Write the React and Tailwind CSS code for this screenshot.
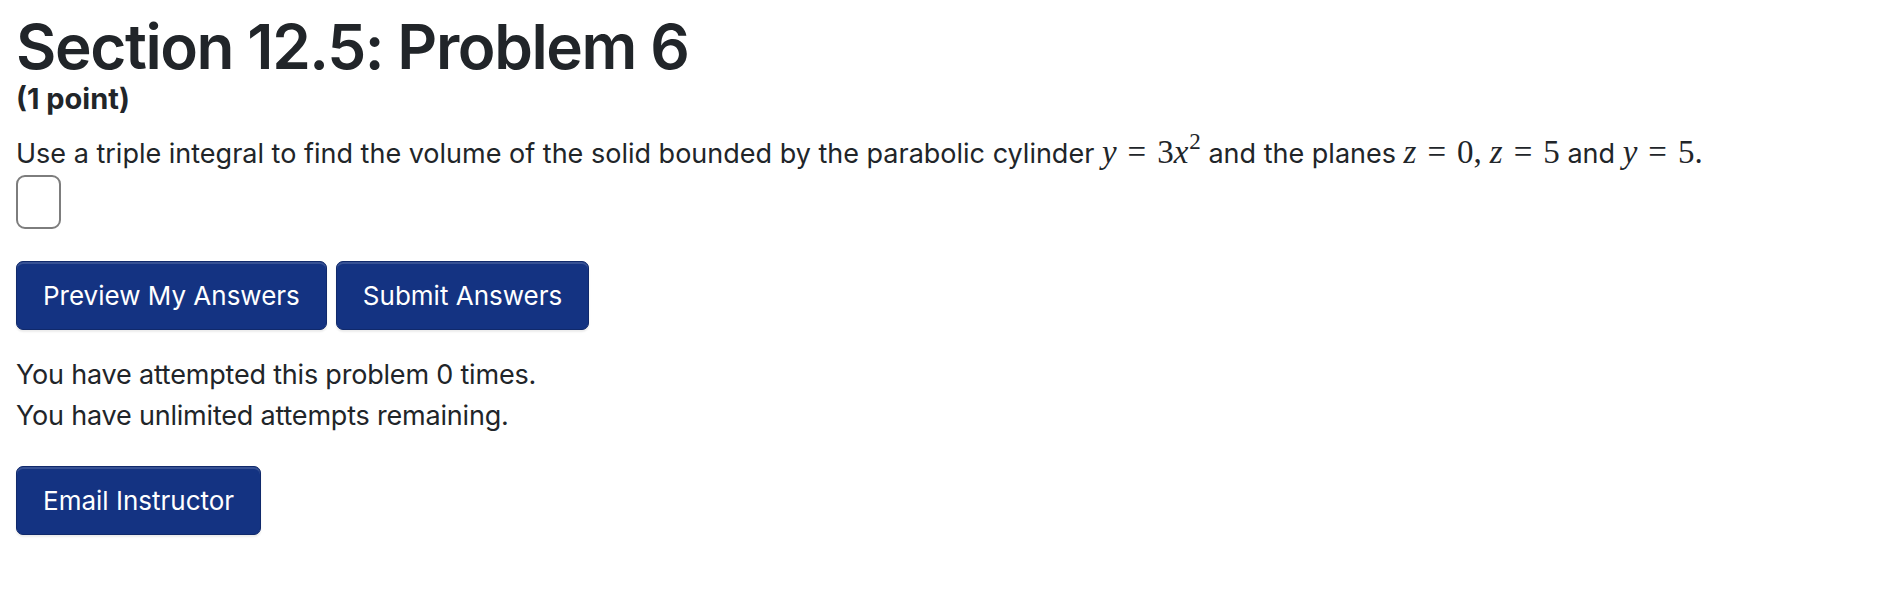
import React from 'react';

const serif = { fontFamily: '"Liberation Serif", serif' };

const MathVar = ({ children }) => (
    <span className="italic" style={serif}>{children}</span>
);

const MathNum = ({ children }) => (
    <span style={serif}>{children}</span>
);

const Eq = () => (
    <span className="mx-[11px]" style={serif}>=</span>
);

const Btn = ({ children }) => (
    <button className="h-[69px] px-[26px] rounded-[7px] bg-[#143382] border border-[#10296b] text-white text-[26px] leading-none shadow-[inset_0_2px_0_rgba(255,255,255,0.15),0_2px_2px_rgba(0,0,0,0.08)]">
        {children}
    </button>
);

const App = () => {
    return (
        <div className="w-[1888px] h-[606px] bg-white text-[#212529] px-4 font-['Inter',sans-serif]">
            <h2 className="pt-[15px] text-[62px] leading-[64px] font-semibold tracking-[-1.4px]">Section 12.5: Problem 6</h2>
            <div className="text-[29px] leading-[40px] font-bold">(1 point)</div>

            <p className="mt-[14px] text-[27px] leading-[42px]">
                Use a triple integral to find the volume of the solid bounded by the parabolic cylinder{' '}
                <span className="text-[33px] leading-none">
                    <MathVar>y</MathVar><Eq /><MathNum>3</MathNum><MathVar>x</MathVar>
                    <span className="text-[23px] relative -top-[14px] ml-[1px]" style={serif}>2</span>
                </span>{' '}
                and the planes{' '}
                <span className="text-[33px] leading-none">
                    <MathVar>z</MathVar><Eq /><MathNum>0,</MathNum><span className="ml-[8px]"><MathVar>z</MathVar></span><Eq /><MathNum>5</MathNum>
                </span>{' '}
                and{' '}
                <span className="text-[33px] leading-none">
                    <MathVar>y</MathVar><Eq /><MathNum>5.</MathNum>
                </span>
            </p>

            <div className="w-[45px] h-[54px] rounded-[9px] border-2 border-[#7d7d7d] bg-white"></div>

            <div className="mt-[32px] flex gap-[9px]">
                <Btn>Preview My Answers</Btn>
                <Btn>Submit Answers</Btn>
            </div>

            <div className="mt-[24px] text-[27px] leading-[41px] tracking-[-0.2px]">
                <div>You have attempted this problem 0 times.</div>
                <div>You have unlimited attempts remaining.</div>
            </div>

            <div className="mt-[30px]">
                <Btn>Email Instructor</Btn>
            </div>
        </div>
    );
};

export default App;
